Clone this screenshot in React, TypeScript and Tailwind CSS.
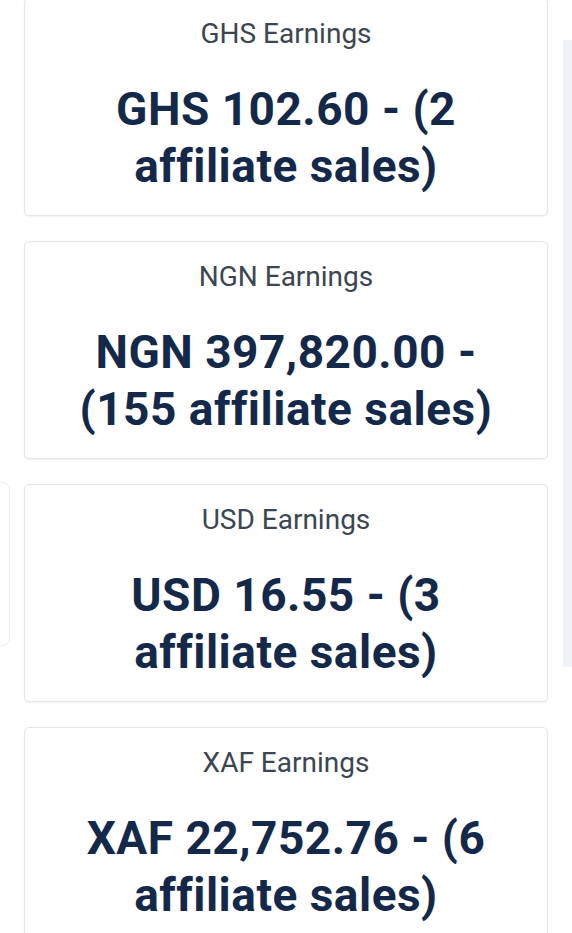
const earnings = [
  { currency: 'GHS', amount: '102.60', sales: 2 },
  { currency: 'NGN', amount: '397,820.00', sales: 155 },
  { currency: 'USD', amount: '16.55', sales: 3 },
  { currency: 'XAF', amount: '22,752.76', sales: 6 },
];

export default function App() {
  return (
    <div
      className="relative h-[933px] w-[572px] overflow-hidden bg-white"
      style={{ fontFamily: 'Roboto, "Noto Sans", sans-serif' }}
    >
      {/* faint side panels peeking in from the edges */}
      <div className="absolute right-0 top-[40px] h-[627px] w-[9px] bg-[#f1f1f8]" />
      <div className="absolute left-[-20px] top-[482px] h-[164px] w-[30px] rounded-lg border border-[#ececef] bg-white" />

      <div className="relative -mt-[2px] flex flex-col gap-[25px] px-[24px]">
        {earnings.map((e) => (
          <div
            key={e.currency}
            className="w-[524px] rounded-[5px] border border-[#e4e6ea] bg-white px-[44px] pb-[20px] pt-[19px] text-center shadow-[0_1px_2px_rgba(0,0,0,0.06)]"
          >
            <p className="text-[28px] leading-[32px] text-[#3c4652]">{e.currency} Earnings</p>
            <p className="mt-[31px] text-[46px] font-bold leading-[57px] tracking-[0.5px] text-[#14294a]">
              {e.currency} {e.amount} - ({e.sales} affiliate sales)
            </p>
          </div>
        ))}
      </div>
    </div>
  );
}
